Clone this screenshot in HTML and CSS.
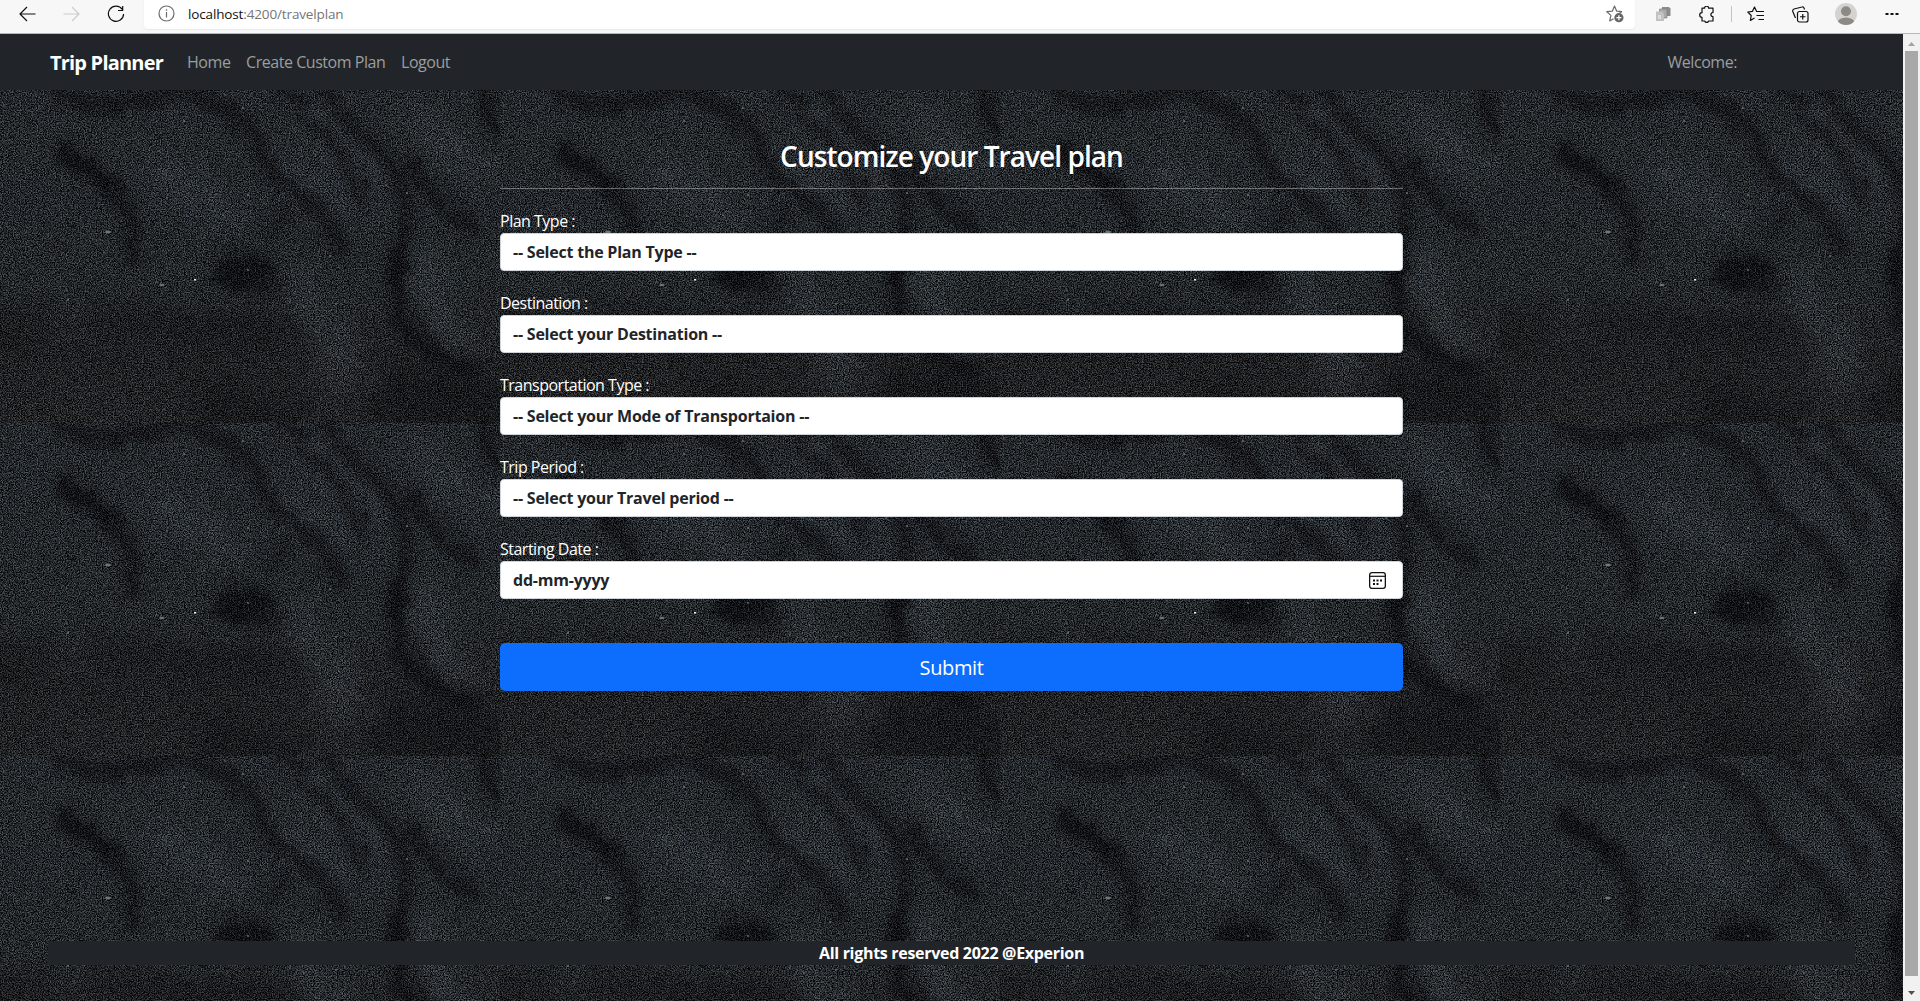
FILE: index.html
```html
<!DOCTYPE html>
<html lang="en">
<head>
<meta charset="utf-8">
<title>Trip Planner</title>
<link rel="stylesheet" href="styles.css">
</head>
<body>
<header class="toolbar">
  <div class="toolbar-nav">
    <svg width="17" height="16" viewBox="0 0 17 16"><path d="M8 1L1 8l7 7M1 8h15.500" class="ln dark"/></svg>
    <svg width="17" height="16" viewBox="0 0 17 16"><path d="M9 1l7 7-7 7M16 8H.5" class="ln pale"/></svg>
    <svg width="18" height="18" viewBox="0 0 18 18"><path d="M15.300 4.500A7.600 7.600 0 1 0 16.600 9M15.700 1v4.500h-4.700" class="ln dark"/></svg>
  </div>
  <div class="address">
    <svg width="17" height="17" viewBox="0 0 17 17"><circle cx="8.500" cy="8.500" r="7.500" class="ln grey"/><path d="M8.500 7v5.500M8.500 4.300v1.500" class="ln grey"/></svg>
    <span class="url"><b>localhost</b>:4200/travelplan</span>
    <svg class="add-fav" width="18" height="18" viewBox="0 0 18 18"><path d="M16 6.700L10.700 6.200 8.500 1 6.300 6.200.8 6.700l4.100 3.700L3.700 16 7.500 13.700M13.500 8L16 6.700" class="ln grey"/><circle cx="12.900" cy="12.700" r="4.600" fill="#666"/><path d="M12.900 10.200v5M10.400 12.700h5" stroke="#fff" stroke-width="1.200"/></svg>
  </div>
  <div class="toolbar-tools">
    <svg class="t-pages" width="15" height="16" viewBox="0 0 15 16"><path d="M6 1h7l1.500 1.500V10H6z" fill="#8c8c8c"/><path d="M3.500 3h6L11 4.500V12H3.500z" fill="#aaa" stroke="#777" stroke-width=".6"/><path d="M0 5.500h6l2 2V15H0z" fill="#c2c2c2"/><path d="M2 9h3v4H2z" fill="#ddd"/></svg>
    <svg class="t-ext" width="16" height="17" viewBox="0 0 16 17"><path d="M3 2.200h2.600a2 2 0 0 1 4 0H14v4.300a2.100 2.100 0 1 0 0 4.200V15H9.700a2.100 2.100 0 0 1-4 0H3v-3.700a2.200 2.200 0 0 1 0-4.600z" class="ln dark"/></svg>
    <i class="t-sep"></i>
    <svg class="t-fav" width="18" height="17" viewBox="0 0 18 17"><path d="M12 5.500L9.500 5.300 7.500 1 5.400 5.400.8 6l3.400 3.500-.8 5L7.500 12M11 5.500h6M9.500 9.500H17M11.500 13.500H17" class="ln dark"/></svg>
    <svg class="t-col" width="17" height="17" viewBox="0 0 17 17"><rect x="5.500" y="5.500" width="10.500" height="10.500" rx="2" class="ln dark"/><path d="M10.750 8v5.500M8 10.750h5.500M12.500 3.500L12 2a1.500 1.500 0 0 0-2-1L2 3a2 2 0 0 0-1.200 2.400L3.500 12" class="ln dark"/></svg>
    <svg class="t-user" width="22" height="22" viewBox="0 0 22 22"><clipPath id="face"><circle cx="11" cy="11" r="11"/></clipPath><g clip-path="url(#face)"><path fill="#d5d3d1" d="M0 0h22v22H0z"/><circle cx="11" cy="8.300" r="5" fill="#8d8985"/><ellipse cx="11" cy="20" rx="8.500" ry="5.500" fill="#8d8985"/></g></svg>
    <svg class="t-more" width="14" height="4" viewBox="0 0 14 4"><path d="M.5 1h3v2h-3zM5.500 1h3v2h-3zM10.500 1h3v2h-3z" fill="#111"/></svg>
  </div>
</header>

<div class="viewport">
  <div class="page">
    <svg class="sand" width="1903" height="911" viewBox="0 0 1903 911" aria-hidden="true">
      <defs>
        <linearGradient id="base" x1="0" y1="0" x2="0" y2="1">
          <stop offset="0" stop-color="#24282c"/>
          <stop offset=".6" stop-color="#23272a"/>
          <stop offset=".8" stop-color="#202123"/>
          <stop offset="1" stop-color="#222325"/>
        </linearGradient>
        <clipPath id="edge"><path d="M0 0h500v333H0z"/></clipPath>
        <filter id="soft" x="-40" y="-40" width="580" height="413" filterUnits="userSpaceOnUse" color-interpolation-filters="sRGB">
          <feGaussianBlur stdDeviation="13" result="b"/>
          <feTurbulence type="fractalNoise" baseFrequency=".03" numOctaves="3" seed="4"/>
          <feDisplacementMap in="b" scale="30" xChannelSelector="R" yChannelSelector="G"/>
        </filter>
        <filter id="fine" x="-40" y="-40" width="580" height="413" filterUnits="userSpaceOnUse" color-interpolation-filters="sRGB">
          <feGaussianBlur stdDeviation="5.500" result="b"/>
          <feTurbulence type="fractalNoise" baseFrequency=".05" numOctaves="4" seed="9"/>
          <feDisplacementMap in="b" scale="18" xChannelSelector="R" yChannelSelector="G"/>
        </filter>
        <filter id="grain" x="0" y="0" width="500" height="333" filterUnits="userSpaceOnUse" color-interpolation-filters="sRGB">
          <feTurbulence type="fractalNoise" baseFrequency=".83" numOctaves="3" seed="7" result="n"/>
          <feColorMatrix in="n" type="matrix" values="1.700 1 0 0 -.85  1.700 1 0 0 -.85  1.700 1 0 0 -.85  0 0 0 0 1" result="g"/>
          <feComposite in="SourceGraphic" in2="g" operator="arithmetic" k1="1.500" k2=".25" k3=".17" k4="-.086" result="c"/>
          <feColorMatrix in="c" type="matrix" values="1 0 0 0 0  0 1 0 0 0  0 0 1 0 0  0 0 0 0 1"/>
        </filter>
        <g id="tile" clip-path="url(#edge)">
          <g filter="url(#grain)">
            <path fill="url(#base)" d="M0 0h500v333H0z"/>
            <g filter="url(#soft)">
              <path d="M140 70Q190 95 240 135M270 75Q320 90 350 140M300 20Q350 60 385 110M410 20Q440 60 490 80" class="ridge"/>
              <path d="M430 160Q420 220 470 265M290 190Q330 230 350 300" class="ridge"/>
              <path d="M375 290Q420 260 520 300v50H370zM200 295Q260 290 320 345H190z" fill="#0e0f11" fill-opacity=".5"/>
              <path d="M90 210Q150 230 220 220T300 235V255Q190 255 90 243z" fill="#121113" fill-opacity=".5"/>
              <path d="M-20 215q50 5 70 20T-20 262z" fill="#131314" fill-opacity=".5"/>
            </g>
            <g filter="url(#fine)" class="furrow">
              <ellipse cx="245" cy="182" rx="32" ry="21" fill="#0b0c0f" fill-opacity=".75" stroke="none"/>
              <path d="M170 -5Q232 16 254 45Q260 80 300 104Q333 130 341 160" stroke-width="15"/>
              <path d="M282 -5Q305 28 328 48Q352 75 365 112" stroke-width="11"/>
              <path d="M322 0Q350 40 378 60Q405 85 407 135Q394 165 398 194" stroke-width="12"/>
              <path d="M398 170Q396 225 408 239Q429 266 470 280" stroke-width="20"/>
              <path d="M412 76Q438 122 474 140" stroke-width="15"/>
              <path d="M62 60Q105 85 119 108Q139 130 130 168" stroke-width="15"/>
              <path d="M68 65Q80 80 105 95M60 5Q100 22 160 8" stroke-width="16"/>
              <path d="M488 -5Q482 30 502 45" stroke-width="16"/>
              <path d="M266 145Q282 132 288 120M268 202L284 194" stroke-width="8"/>
            </g>
          </g>
          <g fill="#69767a">
            <ellipse cx="108" cy="142" rx="3" ry="1.300"/><ellipse cx="162" cy="195" rx="2.200" ry="1.200"/>
            <circle cx="243" cy="18" r=".9"/><circle cx="184" cy="31" r="1"/><circle cx="275" cy="58" r=".8"/><circle cx="248" cy="105" r="1"/><circle cx="68" cy="210" r="1.100"/><circle cx="74" cy="226" r=".8"/><circle cx="304" cy="217" r=".8"/><circle cx="336" cy="214" r=".9"/><circle cx="330" cy="166" r=".9"/><circle cx="248" cy="180" r=".9"/><circle cx="223" cy="125" r=".8"/><circle cx="407" cy="103" r="1"/><circle cx="449" cy="81" r=".8"/><circle cx="225" cy="5" r=".8"/><circle cx="97" cy="52" r=".8"/><circle cx="173" cy="86" r=".7"/><circle cx="363" cy="276" r=".7"/>
          </g>
          <path d="M194 189h2.200v1.600H194z" fill="#eef2f3"/>
        </g>
      </defs>
      <use href="#tile"/><use href="#tile" x="500"/><use href="#tile" x="1000"/><use href="#tile" x="1500"/>
      <use href="#tile" y="333"/><use href="#tile" x="500" y="333"/><use href="#tile" x="1000" y="333"/><use href="#tile" x="1500" y="333"/>
      <use href="#tile" y="666"/><use href="#tile" x="500" y="666"/><use href="#tile" x="1000" y="666"/><use href="#tile" x="1500" y="666"/>
    </svg>

    <nav class="navbar">
      <a class="brand">Trip Planner</a>
      <a class="link home">Home</a>
      <a class="link custom">Create Custom Plan</a>
      <a class="link logout">Logout</a>
      <span class="link welcome">Welcome:</span>
    </nav>

    <form class="plan">
      <h3 class="title">Customize your Travel plan</h3>
      <hr class="rule">
      <div class="field"><label>Plan Type :</label><div class="control">-- Select the Plan Type --</div></div>
      <div class="field"><label>Destination :</label><div class="control">-- Select your Destination --</div></div>
      <div class="field"><label>Transportation Type :</label><div class="control">-- Select your Mode of Transportaion --</div></div>
      <div class="field"><label>Trip Period :</label><div class="control">-- Select your Travel period --</div></div>
      <div class="field"><label>Starting Date :</label><div class="control">dd-mm-yyyy
        <svg width="17" height="17" viewBox="0 0 17 17"><rect x=".65" y=".65" width="15.700" height="15.700" rx="2.300" fill="none" stroke="#111" stroke-width="1.300"/><path d="M1 4.300h15" stroke="#111" stroke-width="1.200"/><path d="M4 7.500h2v2H4zM7.500 7.500h2v2h-2zM11 7.500h2v2h-2zM4 11h2v2H4zM7.500 11h2v2h-2z" fill="#111"/></svg></div></div>
      <button class="submit" type="button">Submit</button>
    </form>

    <footer class="footer">All rights reserved 2022 @Experion</footer>
  </div>
  <div class="scrollbar">
    <svg width="7" height="4" viewBox="0 0 7 4"><path d="M0 4L3.500 0 7 4z" fill="#a3a3a3"/></svg>
    <i class="thumb"></i>
    <svg width="7" height="4" viewBox="0 0 7 4"><path d="M0 0h7L3.500 4z" fill="#505050"/></svg>
  </div>
</div>
</body>
</html>
```
FILE: styles.css
```css
* { box-sizing: border-box; }
body {
  margin: 0;
  width: 1920px;
  height: 1001px;
  overflow: hidden;
  display: flex;
  flex-direction: column;
  font-family: "Open Sans", "Noto Sans", sans-serif;
  font-size: 16px;
  line-height: 24px;
  color: #fff;
  white-space: nowrap;
}
svg { display: block; flex: none; }

/* browser toolbar */
.toolbar {
  height: 34px;
  flex: none;
  display: flex;
  background: #f7f7f7;
  border-bottom: 1px solid #b4b8b6;
}
.toolbar-nav {
  width: 144px;
  height: 27px;
  padding-left: 19px;
  display: flex;
  align-items: center;
  gap: 27px;
}
.ln { fill: none; stroke-width: 1.2; stroke-linejoin: round; }
.dark { stroke: #111; }
.pale { stroke: #ccc; }
.grey { stroke: #6b6b6b; }
.address {
  width: 1491px;
  height: 29px;
  padding: 0 11px 2px 14px;
  display: flex;
  align-items: center;
  background: #fff;
  border-radius: 0 0 4px 4px;
  box-shadow: 0 1px 2px #0001;
}
.url { margin-left: 13px; font-size: 13.5px; letter-spacing: -.14px; color: #757575; }
.url b { font-weight: 400; color: #111; }
.add-fav { margin-left: auto; }
.toolbar-tools { height: 28px; display: flex; align-items: center; }
.t-pages { margin-left: 21px; }
.t-ext { margin-left: 28px; }
.t-sep { width: 1px; height: 16px; margin-left: 16px; background: #c4c4c4; }
.t-fav { margin-left: 15px; }
.t-col { margin-left: 27px; }
.t-user { margin-left: 26px; }
.t-more { margin-left: 28px; }

.viewport { flex: 1; display: flex; }
.page {
  position: relative;
  width: 1903px;
  display: flex;
  flex-direction: column;
}

/* tiled sand backdrop */
.sand { position: absolute; top: 56px; left: 0; z-index: -1; }
.ridge { fill: none; stroke: #2f3439; stroke-width: 24; }
.furrow { fill: none; stroke: #0b0c0f; stroke-opacity: .62; stroke-linecap: round; }

.navbar {
  height: 56px;
  padding: 0 166px 0 50px;
  display: flex;
  align-items: center;
  background: #212529;
}
.brand { width: 137px; padding-top: 1px; font-size: 20px; font-weight: 700; letter-spacing: -.8px; }
.link { color: #9b9d9f; letter-spacing: -.45px; }
.home { width: 59px; }
.custom { width: 155px; }
.welcome { margin-left: auto; }

/* form */
.plan {
  width: 903px;
  margin: 49px auto 0 500px;
  display: flex;
  flex-direction: column;
}
.title {
  margin: 0;
  font-size: 28px;
  line-height: 34px;
  font-weight: 600;
  letter-spacing: -.95px;
  text-align: center;
}
.rule {
  width: 100%;
  height: 1px;
  margin: 15px 0 20px;
  border: 0;
  background: #fff;
  opacity: .35;
}
.field { margin-bottom: 20px; }
label { display: block; height: 24px; letter-spacing: -.5px; }
.control {
  height: 38px;
  padding: 0 16px 0 12px;
  display: flex;
  align-items: center;
  justify-content: space-between;
  background: #fff;
  border: 1px solid #ced4da;
  border-radius: 4px;
  color: #212529;
  font-weight: 700;
  letter-spacing: -.22px;
}
.submit {
  height: 48px;
  margin-top: 24px;
  border: 0;
  border-radius: 5px;
  background: #0d6efd;
  color: #fff;
  font: 400 20px "Open Sans", sans-serif;
  letter-spacing: -.4px;
}
.footer {
  width: 1807px;
  height: 24px;
  margin: auto 48px 36px;
  background: #212529;
  font-weight: 700;
  letter-spacing: -.3px;
  text-align: center;
}

.scrollbar {
  width: 17px;
  padding: 8px 0 6px;
  display: flex;
  flex-direction: column;
  align-items: center;
  background: #f1f1f1;
}
.thumb { width: 13px; height: 925px; margin: 5px 0 auto; background: #a8a8a8; }
```
